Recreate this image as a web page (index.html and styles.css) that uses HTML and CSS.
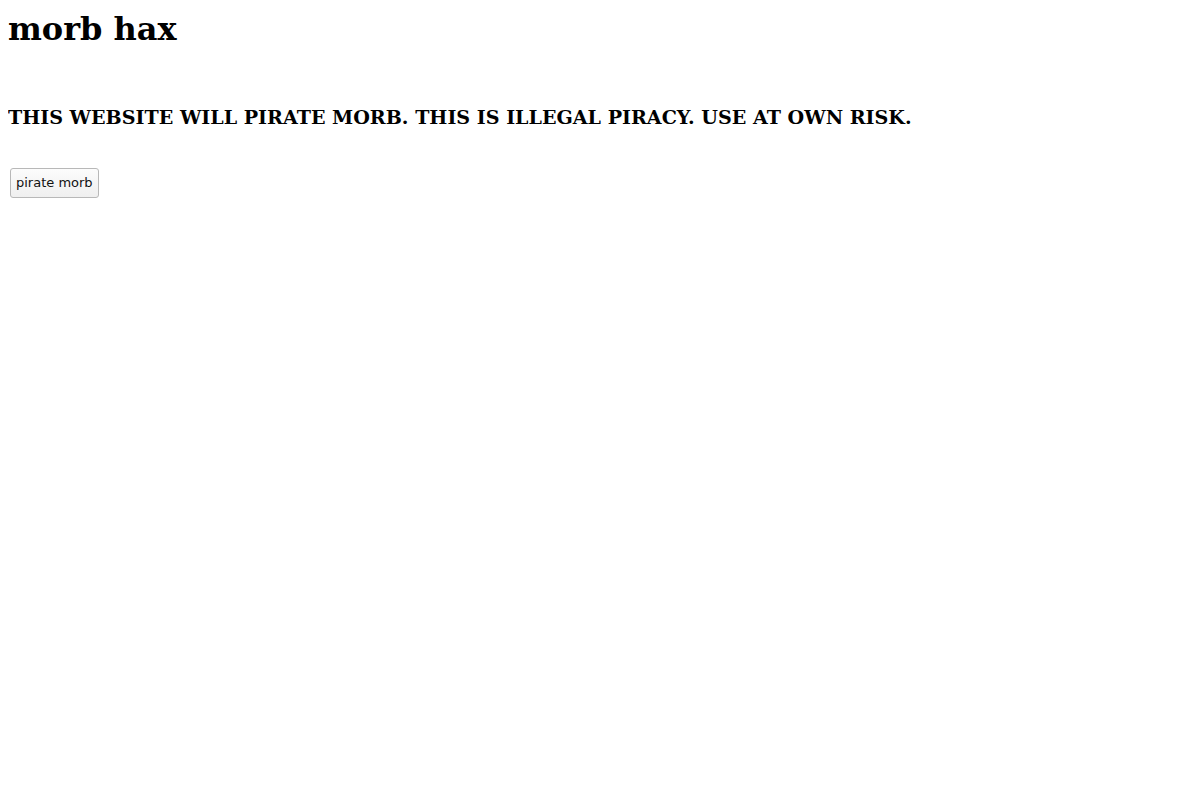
FILE: index.html
```html
<!DOCTYPE html>
<html>
<head>
<meta charset="utf-8">
<link rel="stylesheet" href="styles.css">
<title>morb hax</title>
</head>
<body class="page">
<h1 class="title">morb hax</h1>
<br>
<h3 class="warning">THIS WEBSITE WILL PIRATE MORB. THIS IS ILLEGAL PIRACY. USE AT OWN RISK.</h3>
<br>
<button class="pirate">pirate morb</button>
</body>
</html>
```
FILE: styles.css
```css
.page {
  font-family: "DejaVu Serif", serif;
  margin: 0 8px 8px;
}
.title {
  margin-top: 9.5px;
  margin-bottom: 20.5px;
}
.warning {
  font-size: 19.1px;
}
.pirate {
  margin: 1px 2px 0;
  font-family: "DejaVu Sans", sans-serif;
  font-size: 13px;
  line-height: 15px;
  padding: 6px 5px 7px;
  color: #111;
  background: linear-gradient(#fcfcfc, #efefef);
  border: 1px solid #b8b8b8;
  border-radius: 3px;
}
```
